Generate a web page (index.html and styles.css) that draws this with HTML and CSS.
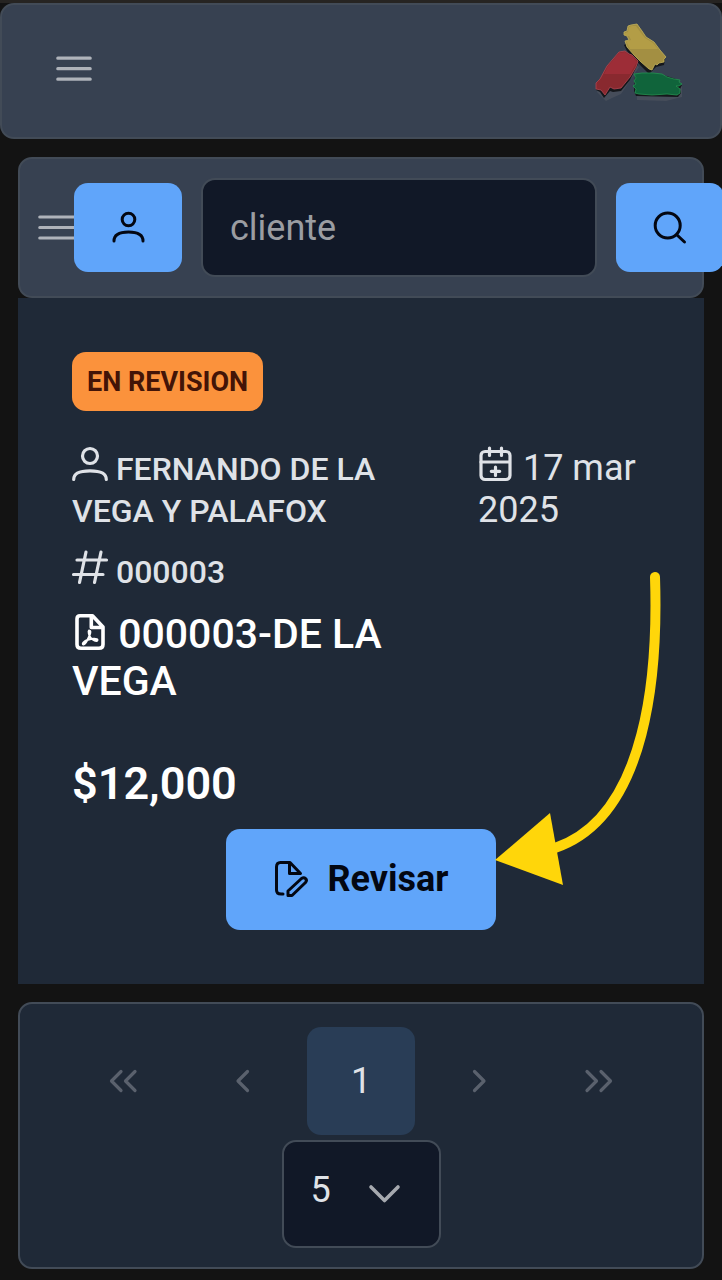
FILE: index.html
```html
<!DOCTYPE html>
<html lang="es">
<head>
<meta charset="utf-8">
<meta name="viewport" content="width=device-width, initial-scale=1">
<title>Revisiones</title>
<link rel="stylesheet" href="styles.css">
</head>
<body>
<header class="topbar">
  <button class="icon-button" type="button" aria-label="Menú">
    <svg class="icon" viewBox="0 0 36 36"><path d="M1.8 7.2H34.2M1.8 17.7H34.2M1.8 28.2H34.2"/></svg>
  </button>
  <svg class="logo" viewBox="0 0 92 84" aria-hidden="true">
    <g fill="#464d5a" transform="translate(1 5)">
      <path d="M28 28L44 39L26 66L17 70L11 73L2 64L4 57Z"/>
      <path d="M42 51L66 50L87 58V69L71 73L42 72Z"/>
    </g>
    <g fill="#15171b" transform="translate(0 2)">
      <path d="M33 18L59 20L71 34L70 40L62 42L55 49L47 41L33 26L30 20Z"/>
      <path d="M28 28L44 39L36 55L27 66L19 67L16 66L10 73L6 67L2 65L4 57L17 41Z"/>
      <path d="M41 51L66 49L82 54L88 60L86 64L87 68L84 72L42 71L40 66Z"/>
    </g>
    <path fill="#a38f42" stroke="#c3b35b" stroke-width=".8" d="M34 3L37 2L43 1L48 8L52 14L60 19L66 27L72 34L70 36V39L65 40L63 42L61 41L58 47L55 46L47 39L40 32L33 24L31 18L35 17L33 13L30 12V9L33 8Z"/>
    <path fill="#b39d46" d="M35 4L38 3H42L47 10L51 15L59 20L64 26H36L32 18L37 17L35 13H31V10L34 9Z"/>
    <path fill="#89292f" stroke="#b14551" stroke-width=".8" d="M25 29L31 28L35 31L38 32L44 38L42 44L36 54L27 65L20 66L16 64L11 72L7 67L2 66L2 60L6 56L13 43Z"/>
    <path fill="#9d2d37" d="M25 30L31 29L35 32L38 33L43 39L36 51H10L14 43Z"/>
    <path fill="#10643b" stroke="#249351" stroke-width=".8" d="M40 51L48 50L59 50L68 51L73 54L80 56L86 57L85 59L88 61L85 63H82L86 66L86 70L83 72L73 71L58 72L45 71L41 70L42 66L39 63L42 61L40 58L42 55Z"/>
  </svg>
</header>

<main class="page">
  <div class="toolbar">
    <button class="icon-button" type="button" aria-label="Opciones">
      <svg class="icon" viewBox="0 0 36 36"><path d="M1.8 7H37M1.8 17.5H37M1.8 28H37"/></svg>
    </button>
    <form class="search">
      <button class="button button-square" type="button" aria-label="Cliente">
        <svg class="icon icon-dark" viewBox="0 0 36 36"><circle cx="18.500" cy="9.500" r="6.300"/><path d="M4 31C4 24.300 9.500 22 18.500 22S33 24.300 33 31"/></svg>
      </button>
      <input class="search-input" type="text" placeholder="cliente" aria-label="cliente">
      <button class="button button-square" type="submit" aria-label="Buscar">
        <svg class="icon icon-dark" viewBox="0 0 36 36"><circle cx="15.700" cy="15.500" r="12.500"/><path d="M25 25L32.500 32"/></svg>
      </button>
    </form>
  </div>

  <article class="card">
    <span class="tag">EN REVISION</span>
    <div class="details">
      <div class="details-main">
        <p class="meta"><svg class="icon" viewBox="0 0 36 36"><circle cx="18" cy="9" r="7.500"/><path d="M1.700 32.500C1.700 26 7 23.800 18 23.800S34.300 26 34.300 32.500"/></svg> FERNANDO DE LA VEGA Y PALAFOX</p>
        <p class="meta"><svg class="icon" viewBox="0 0 36 36"><path d="M5 10H34.500M1.500 24.500H31M14 2L7.500 32.500M29 2L22.500 32.500"/></svg> 000003</p>
        <h2 class="title"><svg class="icon" viewBox="0 0 36 36"><path class="bold" d="M20.500 .7H8Q5 .7 5 4V29.500Q5 33.300 9 33.300H27Q31 33.300 31 29.500V12ZM19.300 1.500V12.500H30.500"/><path class="fine" d="M17 15.500C19 15.500 18.500 18 17.500 20.500C16 24 14 29 11.500 29.500C9.500 29 12 26 16 24.800C19 24 25 23 25.500 25C25 27.500 20.500 25 18.500 22.500C17 20.500 16 16.500 17 15.500Z"/></svg> 000003-DE LA VEGA</h2>
      </div>
      <p class="date"><svg class="icon" viewBox="0 0 36 36"><rect x="3" y="4.500" width="29" height="28" rx="4"/><path d="M3 15H31.500M11.500 1V8.500M23.500 1V8.500M17.500 20V28.500M13.300 24.300H21.700"/></svg> 17 mar 2025</p>
    </div>
    <p class="price">$12,000</p>
    <button class="button button-review" type="button">
      <svg class="icon icon-dark" viewBox="0 0 36 36"><path d="M9 33H7Q2.500 33 2.500 29V6Q2.500 1.500 6.500 1.500H16L26.500 12.500M15.500 2V12.500H26M14 34.500V30L27.500 17.500C30.500 15.500 34 18.500 31.500 21.500L18 34.500Z"/></svg>
      Revisar
    </button>
    <svg class="pointer" viewBox="0 0 168 320" aria-hidden="true">
      <path fill="none" stroke="#ffd60a" stroke-width="10" stroke-linecap="round" d="M160 9C163 100 154 248 60 280"/>
      <path fill="#ffd60a" d="M0 292L55 245L68 317Z"/>
    </svg>
  </article>

  <nav class="paginator" aria-label="Paginación">
    <div class="pages">
      <button class="page-button" type="button" disabled aria-label="Primera página"><svg class="icon" viewBox="0 0 36 36"><path d="M16 8.500L6.500 18L16 27.500M30 8.500L20.500 18L30 27.500"/></svg></button>
      <button class="page-button" type="button" disabled aria-label="Página anterior"><svg class="icon" viewBox="0 0 36 36"><path d="M23.500 8.500L14 18L23.500 27.500"/></svg></button>
      <button class="page-button page-current" type="button" aria-current="page">1</button>
      <button class="page-button" type="button" disabled aria-label="Página siguiente"><svg class="icon" viewBox="0 0 36 36"><path d="M12.500 8.500L22 18L12.500 27.500"/></svg></button>
      <button class="page-button" type="button" disabled aria-label="Última página"><svg class="icon" viewBox="0 0 36 36"><path d="M6 8.500L15.500 18L6 27.500M20 8.500L29.500 18L20 27.500"/></svg></button>
    </div>
    <div class="page-size">
      <select class="page-size-select" aria-label="Filas por página"><option>5</option><option>10</option><option>20</option></select>
      <svg class="icon page-size-icon" viewBox="0 0 36 36"><path class="bold" d="M4 13L17.500 26.500L31 13"/></svg>
    </div>
  </nav>
</main>
</body>
</html>
```
FILE: styles.css
```css
* {
  box-sizing: border-box;
}

body {
  margin: 0;
  padding-top: 3px;
  overflow-x: hidden;
  background: #131313;
  color: #dfe2e7;
  font-family: Roboto, "Liberation Sans", sans-serif;
  font-size: 36px;
  line-height: 42px;
}

body::before {
  content: "";
  position: absolute;
  inset: 0 0 auto;
  height: 3px;
  background: #262422;
}

p,
h2 {
  margin: 0;
}

button,
input,
select {
  margin: 0;
  font: inherit;
}

.icon {
  flex: none;
  width: 36px;
  height: 36px;
  fill: none;
  overflow: visible;
  stroke: currentColor;
  stroke-width: 3.2;
  stroke-linecap: round;
  stroke-linejoin: round;
}

.icon .bold {
  stroke-width: 3.6;
}

.icon .fine {
  stroke-width: 2;
}

.icon-dark {
  color: #030712;
  stroke-width: 3;
}

.icon-button {
  display: flex;
  padding: 0;
  border: 0;
  background: none;
  color: #afb3ba;
}

.topbar {
  display: flex;
  align-items: center;
  justify-content: space-between;
  padding: 16px 36px 20px 54px;
  border: 2px solid #424b57;
  border-radius: 14px;
  background: #374151;
}

.logo {
  width: 92px;
  height: 84px;
  margin: 2px -2px 10px 0;
}

.page {
  padding: 18px;
}

.toolbar {
  display: flex;
  align-items: center;
  padding: 19px 18px;
  border: 2px solid #424b57;
  border-radius: 14px;
  background: #374151;
}

/* The search row is wider than the bar and runs past its right edge. */
.search {
  display: flex;
  flex: 1;
  align-items: center;
  gap: 19px;
  min-width: 0;
  margin-right: -40px;
}

.search-input {
  flex: 1;
  min-width: 0;
  height: 99px;
  padding: 0 27px;
  border: 2px solid #424b57;
  border-radius: 14px;
  background: #111827;
  color: #dfe2e7;
}

.search-input::placeholder {
  color: #9b9da2;
  opacity: 1;
}

.button {
  display: flex;
  align-items: center;
  justify-content: center;
  border: 0;
  border-radius: 14px;
  background: #60a5fa;
  color: #030712;
}

.button-square {
  flex: none;
  width: 108px;
  height: 89px;
}

.card {
  position: relative;
  display: flex;
  flex-direction: column;
  padding: 54px;
  background: #1f2937;
}

.tag {
  align-self: flex-start;
  padding: 9px 15px 8px;
  border-radius: 14px;
  background: #fb923c;
  color: #431407;
  font-size: 27px;
  font-weight: 700;
}

.details {
  display: grid;
  grid-template-columns: 1fr 172px;
  gap: 54px;
  margin-top: 36px;
}

.details .icon {
  vertical-align: -3px;
}

.details-main {
  display: flex;
  flex-direction: column;
  gap: 18px;
}

.meta {
  font-size: 32px;
  font-weight: 500;
}

.title {
  color: #ffffff;
  font-size: 41px;
  font-weight: 500;
  line-height: 47px;
}

.price {
  margin-top: 52px;
  color: #ffffff;
  font-size: 45px;
  font-weight: 600;
  line-height: 54px;
}

.button-review {
  align-self: center;
  gap: 18px;
  height: 101px;
  margin-top: 18px;
  padding: 0 48px 2px;
  font-weight: 700;
}

.pointer {
  position: absolute;
  top: 270px;
  right: 41px;
  width: 168px;
  height: 320px;
  pointer-events: none;
}

.paginator {
  display: flex;
  flex-direction: column;
  align-items: center;
  gap: 5px;
  margin-top: 18px;
  padding: 23px 18px 19px;
  border: 2px solid #424b57;
  border-radius: 14px;
  background: #1f2937;
}

.pages {
  display: flex;
  gap: 11px;
}

.page-button {
  display: flex;
  align-items: center;
  justify-content: center;
  width: 108px;
  height: 108px;
  padding: 0;
  border: 0;
  border-radius: 14px;
  background: none;
  color: #5a616d;
}

.page-current {
  background: #293d56;
  color: #dfe2e7;
}

.page-size {
  position: relative;
}

.page-size-select {
  display: block;
  width: 159px;
  height: 108px;
  padding: 0 27px 8px;
  border: 2px solid #424b57;
  border-radius: 14px;
  appearance: none;
  background: #111827;
  color: #dfe2e7;
}

.page-size-icon {
  position: absolute;
  top: 34px;
  right: 38px;
  color: #a6a9af;
  pointer-events: none;
}
```
